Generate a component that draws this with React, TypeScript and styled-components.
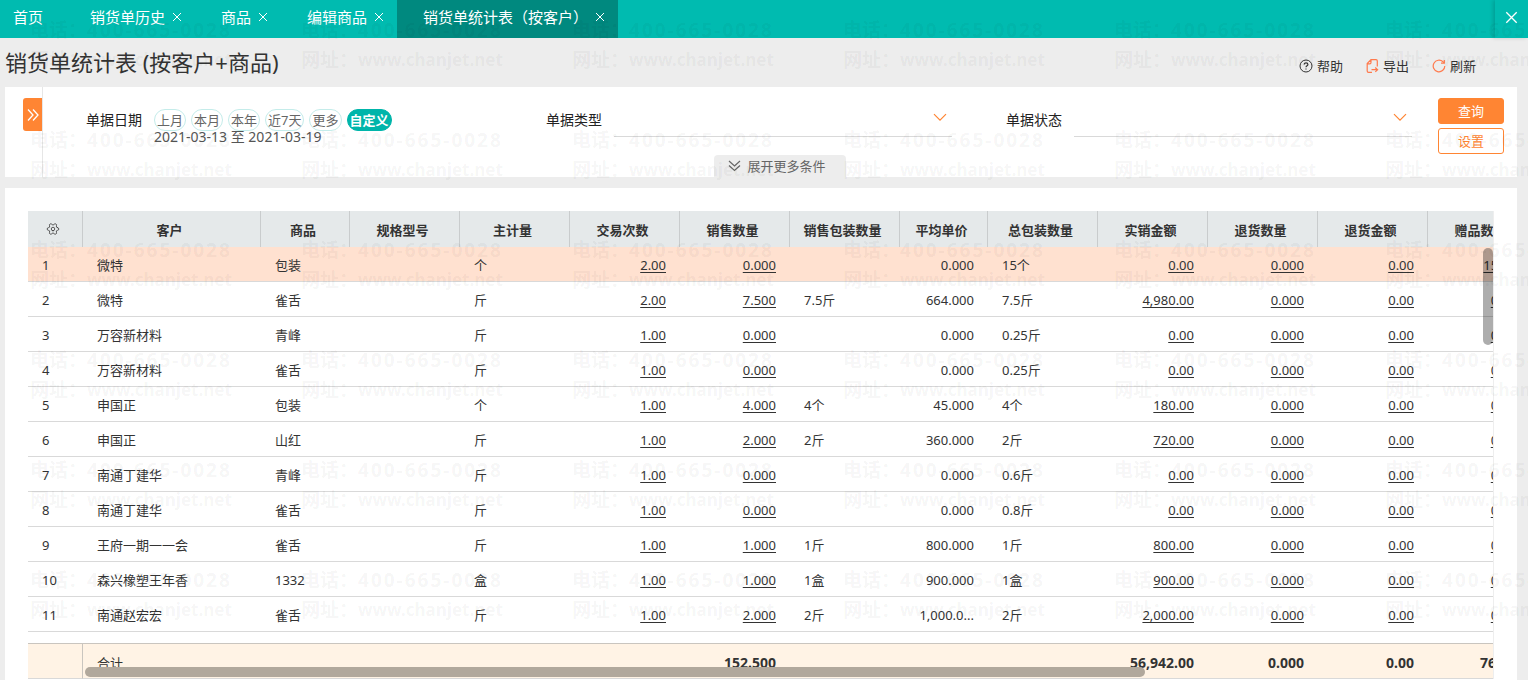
import React from "react";
import styled, { createGlobalStyle, css } from "styled-components";
import { Settings } from "lucide-react";

const fontStack = `"Noto Sans", "Noto Sans CJK SC", sans-serif`;

const GlobalStyle = createGlobalStyle`
  * { box-sizing: border-box; }
  body { margin: 0; background: #ededed; font-family: ${fontStack}; font-size: 13px; color: #333; }
  button, select { font-family: inherit; }
  svg { display: block; flex: none; }
`;

const Page = styled.div`
  position: relative;
  display: flex;
  flex-direction: column;
  min-height: 100vh;
  overflow: hidden;
`;

const TabBar = styled.nav`
  display: flex;
  height: 38px;
  background: #00bbb0;
`;

const Tab = styled.div<{ $active?: boolean; $home?: boolean }>`
  display: flex;
  align-items: center;
  gap: 7px;
  padding: ${(p) => (p.$home ? "0 21px 5px 13px" : "0 13px 5px 26px")};
  background: ${(p) => (p.$active ? "#00897f" : "transparent")};
`;

const TabButton = styled.button`
  padding: 0;
  border: 0;
  background: none;
  color: #fff;
  font-size: 15px;
  line-height: 22px;
  white-space: nowrap;
  cursor: pointer;
`;

const CloseButton = styled.button`
  padding: 0;
  border: 0;
  background: none;
  color: #fff;
  cursor: pointer;
`;

const CloseAll = styled(CloseButton)`
  display: flex;
  align-items: center;
  justify-content: center;
  width: 33px;
  margin-left: auto;
  padding-bottom: 4px;
  box-shadow: -2px 0 4px rgba(0, 0, 0, 0.15);
`;

const TitleBar = styled.header`
  display: flex;
  align-items: center;
  justify-content: space-between;
  height: 49px;
  padding: 0 52px 0 5px;
`;

const Title = styled.h1`
  margin: 0;
  font-size: 22px;
  font-weight: 400;
  line-height: 32px;
  padding-bottom: 2px;
  color: #333;
`;

const Actions = styled.div`
  display: flex;
  gap: 23px;
  padding-top: 6px;
`;

const Action = styled.button`
  display: flex;
  align-items: center;
  gap: 4px;
  padding: 0;
  border: 0;
  background: none;
  color: #333;
  font-size: 13px;
  line-height: 20px;
  cursor: pointer;
`;

const Panel = styled.section`
  margin: 0 11px 0 5px;
  background: #fff;
`;

const FilterPanel = styled(Panel)`
  display: flex;
  min-height: 90px;
  margin-bottom: 11px;
`;

const Rail = styled.div`
  width: 38px;
  padding: 11px 0 0 18px;
  border-right: 1px solid #e6e6e6;
`;

const RailButton = styled.button`
  display: flex;
  align-items: center;
  justify-content: center;
  width: 19px;
  height: 33px;
  padding: 0;
  border: 0;
  border-radius: 3px 0 0 3px;
  background: #ff8533;
  color: #fff;
  cursor: pointer;
`;

const FilterBody = styled.div`
  display: flex;
  flex: 1;
  flex-direction: column;
  justify-content: space-between;
`;

const FilterRow = styled.div`
  display: flex;
  gap: 26px;
  padding: 11px 13px 0 43px;
`;

const Fields = styled.div`
  display: grid;
  flex: 1;
  grid-template-columns: repeat(3, 1fr);
  gap: 54px;
  padding-top: 11px;
`;

const Field = styled.div`
  display: flex;
  align-items: flex-start;
  gap: 12px;
`;

const labelText = css`
  flex: none;
  color: #222;
  font-size: 14px;
  line-height: 22px;
`;

const Label = styled.label`
  ${labelText}
`;

const GroupLabel = styled.span`
  ${labelText}
`;

const Chips = styled.div`
  display: flex;
  gap: 5px;
`;

const Chip = styled.button<{ $on?: boolean }>`
  height: 22px;
  padding: 0 2px;
  border: 1px solid ${(p) => (p.$on ? "#00b5aa" : "#c4ecea")};
  border-radius: 11px;
  background: ${(p) => (p.$on ? "#00b5aa" : "#fff")};
  color: ${(p) => (p.$on ? "#fff" : "#666")};
  font-size: 13px;
  font-weight: ${(p) => (p.$on ? 700 : 400)};
  line-height: 20px;
  white-space: nowrap;
  cursor: pointer;
`;

const DateRange = styled.div`
  color: #555;
  font-size: 14px;
  line-height: 12px;
  white-space: nowrap;
`;

const SelectBox = styled.div`
  position: relative;
  flex: 1;
  color: #ff8533;

  svg {
    position: absolute;
    top: 4px;
    right: 5px;
    pointer-events: none;
  }
`;

const Select = styled.select`
  display: block;
  width: 100%;
  height: 28px;
  border: 0;
  border-bottom: 1px solid #d9d9d9;
  background: transparent;
  appearance: none;
`;

const Buttons = styled.div`
  display: flex;
  flex-direction: column;
  gap: 4px;
`;

const Button = styled.button<{ $primary?: boolean }>`
  width: 66px;
  height: 26px;
  padding: 0;
  border: 1px solid #ff8533;
  border-radius: 3px;
  background: ${(p) => (p.$primary ? "#ff8533" : "#fff")};
  color: ${(p) => (p.$primary ? "#fff" : "#ff8533")};
  font-size: 13px;
  line-height: 24px;
  cursor: pointer;
`;

const Expander = styled.button`
  display: flex;
  align-items: center;
  align-self: center;
  gap: 6px;
  height: 22px;
  padding: 0 20px 0 14px;
  border: 0;
  border-radius: 4px 4px 0 0;
  background: #ededed;
  color: #666;
  font-size: 13px;
  line-height: 22px;
  cursor: pointer;
`;

const TablePanel = styled(Panel)`
  flex: 1;
  padding: 23px 23px 0;
`;

const Grid = styled.div`
  position: relative;
  overflow: hidden;
  border-right: 1px solid #eee;
`;

const Table = styled.table`
  width: 1510px;
  border-collapse: separate;
  border-spacing: 0;
  table-layout: fixed;
`;

const HeadCell = styled.th`
  height: 36px;
  padding: 0 4px 0 0;
  border-right: 1px solid #c9cccd;
  background: #e5e9ea;
  color: #333;
  font-size: 13px;
  font-weight: 700;
  text-align: center;

  svg {
    margin: 0 auto;
    transform: rotate(90deg);
  }
`;

const Row = styled.tr<{ $selected?: boolean }>`
  background: ${(p) => (p.$selected ? "#ffe1d0" : "#fff")};
`;

const Cell = styled.td<{ $right?: boolean }>`
  height: 35px;
  padding: 1px 14px 0;
  border-bottom: 1px solid #d9d9d9;
  line-height: 20px;
  text-align: ${(p) => (p.$right ? "right" : "left")};
  white-space: nowrap;
`;

const CellLink = styled.a`
  color: inherit;
  text-decoration: underline;
  text-underline-offset: 2px;
`;

const Totals = styled(Table)`
  margin-top: 11px;
`;

const TotalCell = styled(Cell)<{ $first?: boolean }>`
  height: 36px;
  padding-top: 3px;
  border-top: 1px solid #c9c5bf;
  border-right: ${(p) => (p.$first ? "1px solid #c9c5bf" : "0")};
  background: #fff3e5;
  font-size: ${(p) => (p.$right ? "14px" : "13px")};
  font-weight: ${(p) => (p.$right ? 700 : 400)};
`;

const ThumbY = styled.div`
  position: absolute;
  top: 37px;
  right: 0;
  width: 10px;
  height: 97px;
  border-radius: 5px;
  background: rgba(0, 0, 0, 0.32);
`;

const ThumbX = styled.div`
  position: absolute;
  right: 348px;
  bottom: 2px;
  left: 57px;
  height: 10px;
  border-radius: 5px;
  background: #b1a89c;
`;

const Watermark = styled.div`
  position: absolute;
  inset: 0;
  display: grid;
  grid-template-columns: repeat(12, 271px);
  grid-template-rows: repeat(6, 110px);
  padding: 15px 0 0 30px;
  overflow: hidden;
  color: rgba(0, 0, 0, 0.05);
  font-size: 19px;
  font-weight: 700;
  line-height: 30px;
  white-space: nowrap;
  pointer-events: none;
`;

const MarkLine = styled.div`
  display: flex;
  height: 30px;
`;

const Phone = styled.span`
  letter-spacing: 2px;
`;

const Site = styled.span`
  font-size: 17px;
`;

const CloseIcon = ({ size = 10 }: { size?: number }) => (
  <svg width={size} height={size} viewBox="0 0 10 10" fill="none" stroke="currentColor" strokeWidth="1">
    <path d="M1 1l8 8M9 1L1 9" />
  </svg>
);

const HelpIcon = () => (
  <svg width="14" height="14" viewBox="0 0 14 14" fill="none" stroke="#333" strokeWidth="1">
    <circle cx="7" cy="7" r="6" />
    <path d="M5.200 5.600c0-2.500 3.700-2.300 3.700-.2C8.900 6.700 7 6.800 7 8.300M7 9.400v1.100" strokeWidth="1.200" />
  </svg>
);

const ExportIcon = () => (
  <svg width="13" height="14" viewBox="0 0 13 14" fill="none" stroke="#ff7a4d" strokeWidth="1.200">
    <path d="M11.300 7.500V2c0-.8-.5-1.300-1.300-1.300H5L1.200 4.500V12c0 .8.500 1.300 1.300 1.300H6M1.200 4.800h2.500c.8 0 1.300-.5 1.300-1.300V.7" />
    <path d="M5.500 10.700h6M9.300 8.500l2.300 2.200-2.300 2.200" />
  </svg>
);

const RefreshIcon = () => (
  <svg width="14" height="14" viewBox="0 0 14 14" fill="none" stroke="#ff7a4d" strokeWidth="1.200">
    <path d="M12.800 7A5.800 5.800 0 1 1 11 2.800l1 1" />
    <path d="M12.300 1v3.200H9" />
  </svg>
);

const RightChevrons = () => (
  <svg width="12" height="14" viewBox="0 0 12 14" fill="none" stroke="currentColor" strokeWidth="1.300">
    <path d="M1 1.500L6 7l-5 5.500M6 1.500L11 7l-5 5.500" />
  </svg>
);

const DownChevrons = () => (
  <svg width="13" height="12" viewBox="0 0 13 12" fill="none" stroke="currentColor" strokeWidth="1.200">
    <path d="M1 1l5.500 5L12 1M1 5.500l5.500 5 5.500-5" />
  </svg>
);

const DownChevron = () => (
  <svg width="14" height="9" viewBox="0 0 14 9" fill="none" stroke="currentColor" strokeWidth="1.200">
    <path d="M1 1.200l6 6 6-6" />
  </svg>
);

const tabs = ["销货单历史", "商品", "编辑商品", "销货单统计表（按客户）"];

const ranges = ["上月", "本月", "本年", "近7天", "更多", "自定义"];

const widths = [55, 178, 89, 110, 110, 110, 110, 110, 88, 110, 110, 110, 110, 110];

const headings = [
  "客户", "商品", "规格型号", "主计量", "交易次数", "销售数量", "销售包装数量",
  "平均单价", "总包装数量", "实销金额", "退货数量", "退货金额", "赠品数量",
];

const rightAligned = [5, 6, 8, 10, 11, 12, 13];
const linked = [5, 6, 10, 11, 12, 13];

const rows = [
  ["1", "微特", "包装", "", "个", "2.00", "0.000", "", "0.000", "15个", "0.00", "0.000", "0.00", "15.000"],
  ["2", "微特", "雀舌", "", "斤", "2.00", "7.500", "7.5斤", "664.000", "7.5斤", "4,980.00", "0.000", "0.00", "0.000"],
  ["3", "万容新材料", "青峰", "", "斤", "1.00", "0.000", "", "0.000", "0.25斤", "0.00", "0.000", "0.00", "0.000"],
  ["4", "万容新材料", "雀舌", "", "斤", "1.00", "0.000", "", "0.000", "0.25斤", "0.00", "0.000", "0.00", "0.000"],
  ["5", "申国正", "包装", "", "个", "1.00", "4.000", "4个", "45.000", "4个", "180.00", "0.000", "0.00", "0.000"],
  ["6", "申国正", "山红", "", "斤", "1.00", "2.000", "2斤", "360.000", "2斤", "720.00", "0.000", "0.00", "0.000"],
  ["7", "南通丁建华", "青峰", "", "斤", "1.00", "0.000", "", "0.000", "0.6斤", "0.00", "0.000", "0.00", "0.000"],
  ["8", "南通丁建华", "雀舌", "", "斤", "1.00", "0.000", "", "0.000", "0.8斤", "0.00", "0.000", "0.00", "0.000"],
  ["9", "王府一期一一会", "雀舌", "", "斤", "1.00", "1.000", "1斤", "800.000", "1斤", "800.00", "0.000", "0.00", "0.000"],
  ["10", "森兴橡塑王年香", "1332", "", "盒", "1.00", "1.000", "1盒", "900.000", "1盒", "900.00", "0.000", "0.00", "0.000"],
  ["11", "南通赵宏宏", "雀舌", "", "斤", "1.00", "2.000", "2斤", "1,000.0...", "2斤", "2,000.00", "0.000", "0.00", "0.000"],
];

const totals = ["", "合计", "", "", "", "", "152.500", "", "", "", "56,942.00", "0.000", "0.00", "76.000"];

const Columns = () => (
  <colgroup>
    {widths.map((w, i) => (
      <col key={i} style={{ width: w }} />
    ))}
  </colgroup>
);

const SelectField = ({ id, label }: { id: string; label: string }) => (
  <Field>
    <Label htmlFor={id}>{label}</Label>
    <SelectBox>
      <Select id={id} />
      <DownChevron />
    </SelectBox>
  </Field>
);

export default function App() {
  return (
    <Page>
      <GlobalStyle />
      <TabBar>
        <Tab $home>
          <TabButton>首页</TabButton>
        </Tab>
        {tabs.map((name, i) => (
          <Tab key={name} $active={i === 3}>
            <TabButton>{name}</TabButton>
            <CloseButton aria-label="关闭">
              <CloseIcon />
            </CloseButton>
          </Tab>
        ))}
        <CloseAll aria-label="关闭全部">
          <CloseIcon size={13} />
        </CloseAll>
      </TabBar>

      <TitleBar>
        <Title>销货单统计表 (按客户+商品)</Title>
        <Actions>
          <Action><HelpIcon />帮助</Action>
          <Action><ExportIcon />导出</Action>
          <Action><RefreshIcon />刷新</Action>
        </Actions>
      </TitleBar>

      <FilterPanel>
        <Rail>
          <RailButton aria-label="展开侧栏">
            <RightChevrons />
          </RailButton>
        </Rail>
        <FilterBody>
          <FilterRow>
            <Fields>
              <Field role="group" aria-labelledby="date-label">
                <GroupLabel id="date-label">单据日期</GroupLabel>
                <div>
                  <Chips>
                    {ranges.map((r) => (
                      <Chip key={r} $on={r === "自定义"}>{r}</Chip>
                    ))}
                  </Chips>
                  <DateRange>2021-03-13 至 2021-03-19</DateRange>
                </div>
              </Field>
              <SelectField id="doc-type" label="单据类型" />
              <SelectField id="doc-status" label="单据状态" />
            </Fields>
            <Buttons>
              <Button $primary>查询</Button>
              <Button>设置</Button>
            </Buttons>
          </FilterRow>
          <Expander>
            <DownChevrons />
            展开更多条件
          </Expander>
        </FilterBody>
      </FilterPanel>

      <TablePanel>
        <Grid>
          <Table>
            <Columns />
            <thead>
              <tr>
                <HeadCell aria-label="列设置"><Settings size={14} strokeWidth={1.5} color="#444" /></HeadCell>
                {headings.map((h) => (
                  <HeadCell key={h}>{h}</HeadCell>
                ))}
              </tr>
            </thead>
            <tbody>
              {rows.map((row, r) => (
                <Row key={row[0]} $selected={r === 0}>
                  {row.map((value, c) => (
                    <Cell key={c} $right={rightAligned.includes(c)}>
                      {linked.includes(c) ? <CellLink href="#">{value}</CellLink> : value}
                    </Cell>
                  ))}
                </Row>
              ))}
            </tbody>
          </Table>
          <Totals>
            <Columns />
            <tbody>
              <tr>
                {totals.map((value, c) => (
                  <TotalCell key={c} $first={c === 0} $right={rightAligned.includes(c)}>
                    {value}
                  </TotalCell>
                ))}
              </tr>
            </tbody>
          </Totals>
          <ThumbY />
          <ThumbX />
        </Grid>
      </TablePanel>

      <Watermark aria-hidden="true">
        {Array.from({ length: 72 }, (_, i) => (
          <div key={i}>
            <MarkLine>电话：<Phone>400-665-0028</Phone></MarkLine>
            <MarkLine>网址：<Site>www.chanjet.net</Site></MarkLine>
          </div>
        ))}
      </Watermark>
    </Page>
  );
}
